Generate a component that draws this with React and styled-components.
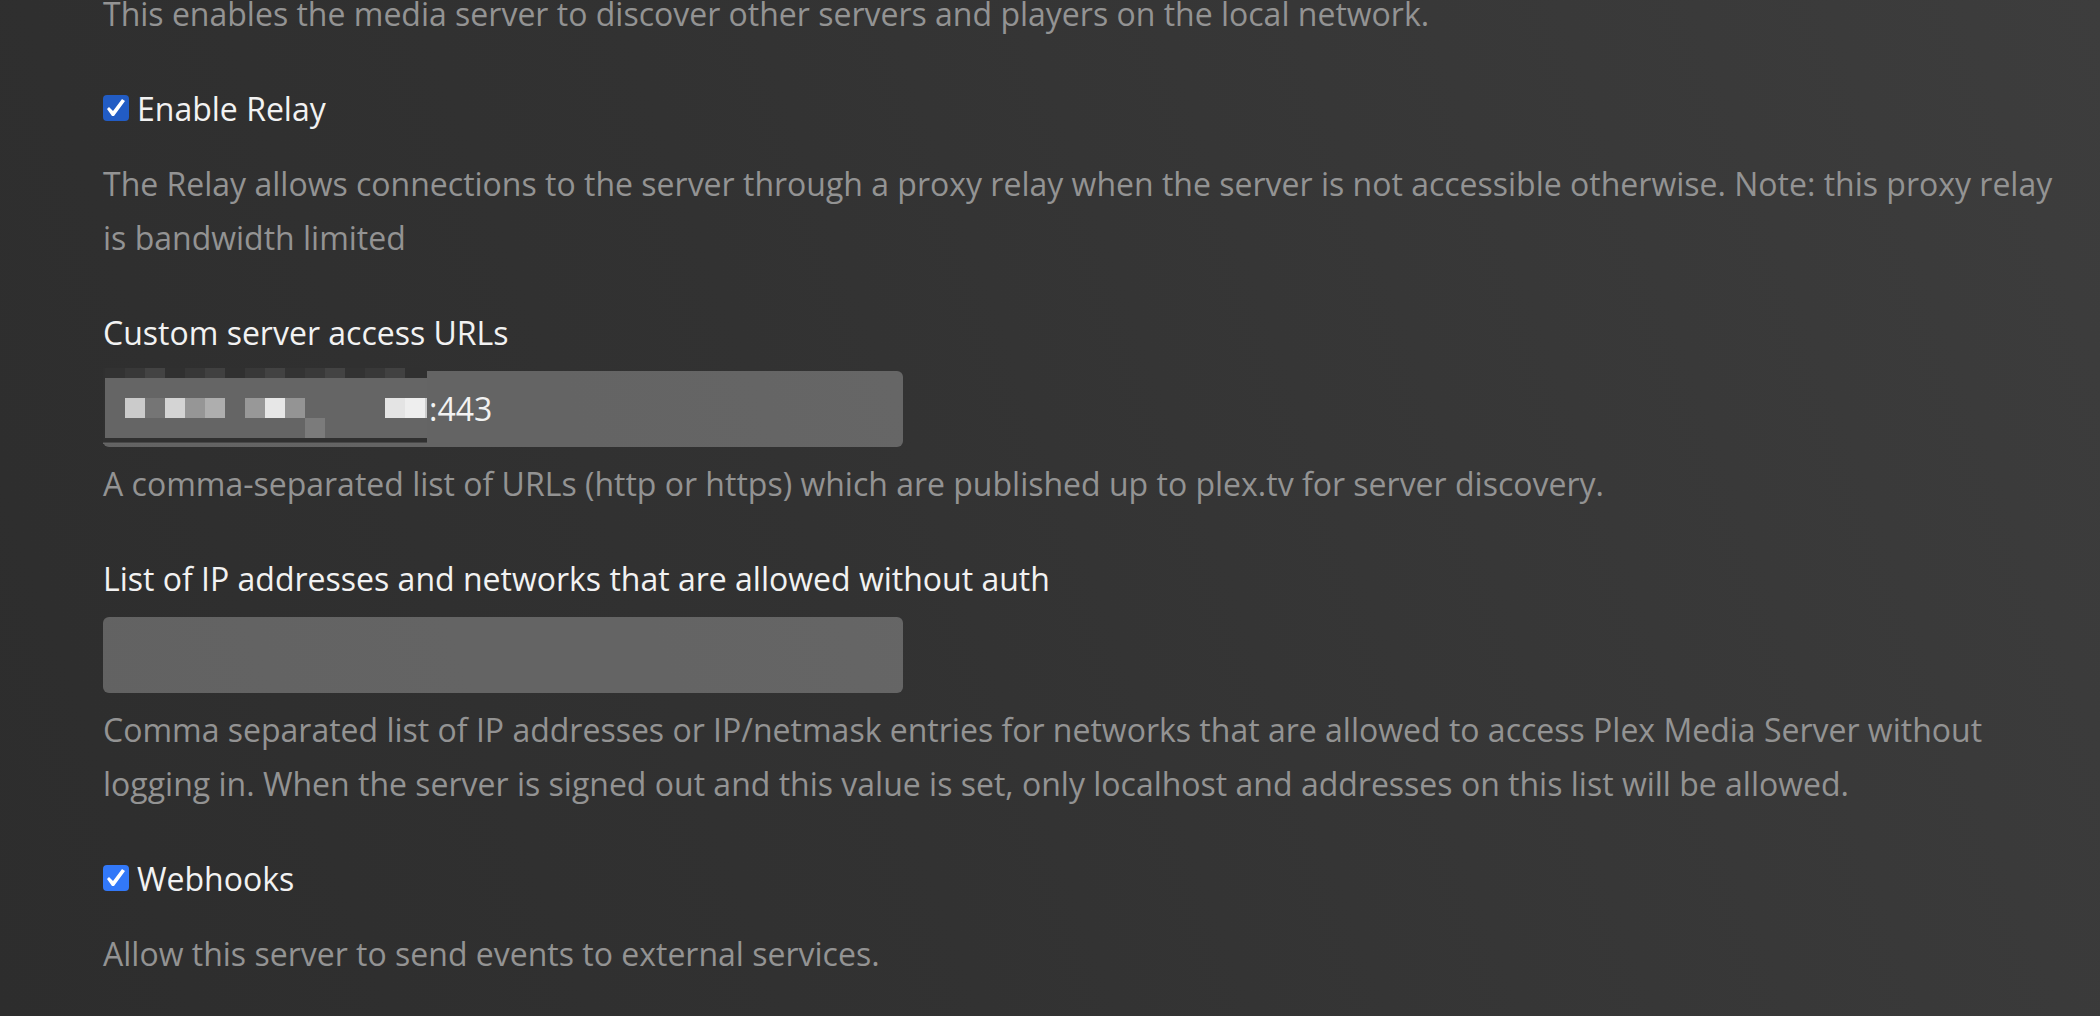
import React, { useId } from "react";
import styled, { createGlobalStyle } from "styled-components";

const GlobalStyle = createGlobalStyle`
  *, *::before, *::after { box-sizing: border-box; }
  html { min-height: 100%; background: #323232; }
  body {
    margin: 0;
    font-family: "Open Sans", "Noto Sans", sans-serif;
    font-size: 32px;
    line-height: 54px;
    color: #f2f2f2;
  }
`;

const Page = styled.main`
  min-height: 100vh;
  padding: 0 40px 0 103px;
  overflow: hidden;
  background: linear-gradient(70deg, #2d2d2d 0%, #323232 40%, #3d3d3d 100%);
`;

const Form = styled.form`
  display: flex;
  flex-direction: column;
  gap: 41px;
  margin-top: -13px;
`;

const Group = styled.div`
  display: flex;
  flex-direction: column;
`;

const Label = styled.label`
  align-self: flex-start;
  margin-bottom: 11px;
`;

const CheckLabel = styled.label`
  display: flex;
  align-items: center;
  align-self: flex-start;
  gap: 8px;
  margin-bottom: 21px;
`;

const Checkbox = styled.input`
  appearance: none;
  width: 26px;
  height: 26px;
  margin: 0 0 2px;
  border-radius: 4px;
  background: ${(p) => (p.$pressed ? "#225cc4" : "#3278f8")};

  &:checked::before {
    content: "";
    display: block;
    width: 26px;
    height: 26px;
    background: #fff;
    clip-path: polygon(4px 14px, 6px 12px, 10px 16px, 19px 4px, 22px 6px, 11px 21px, 9px 21px);
  }
`;

const Help = styled.p`
  margin: 0;
  color: #939393;
`;

const Field = styled.div`
  position: relative;
  display: flex;
  width: 100%;
  max-width: 800px;
  margin-bottom: 10px;
`;

const TextInput = styled.input`
  width: 100%;
  height: 76px;
  padding: 0 20px 2px ${(p) => (p.$masked ? "326px" : "20px")};
  border: 0;
  border-radius: 6px;
  outline: 0;
  background: rgba(255, 255, 255, 0.25);
  color: #f2f2f2;
  font: inherit;
`;

const Mask = styled.svg`
  position: absolute;
  top: -3px;
  left: 0;
`;

const edgeTones = [
  "#323232", "#383838", "#434343", "#303030", "#373737", "#404040", "#303030", "#383838",
  "#424242", "#333333", "#393939", "#434343", "#323232", "#383838", "#414141", "#303030", "#303030",
];

const blocks = [
  [22, "#cbcbcb"], [42, "#757575"], [62, "#d4d4d4"], [82, "#969696"], [102, "#aeaeae"],
  [142, "#989898"], [162, "#e7e7e7"], [182, "#949494"], [282, "#e4e4e4"], [302, "#eeeeee"],
];

function Mosaic() {
  return (
    <Mask width="324" height="76" viewBox="0 0 324 76" shapeRendering="crispEdges" aria-hidden="true">
      <rect width="2" height="76" fill="#303030" />
      {edgeTones.map((tone, i) => (
        <rect key={i} x={2 + i * 20} width="20" height="10" fill={tone} />
      ))}
      <rect x="2" y="10" width="322" height="60" fill="#656565" />
      {blocks.map(([x, tone]) => (
        <rect key={x} x={x} y="30" width="20" height="20" fill={tone} />
      ))}
      <rect x="322" y="30" width="2" height="20" fill="#cccccc" />
      <rect x="202" y="50" width="20" height="20" fill="#7b7b7b" />
      <rect y="70" width="324" height="4" fill="#303030" />
      <rect y="74" width="324" height="1" fill="#484848" />
      <rect y="75" width="324" height="1" fill="#656565" />
    </Mask>
  );
}

function CheckSetting({ label, help, pressed }) {
  const id = useId();
  return (
    <Group>
      <CheckLabel htmlFor={id}>
        <Checkbox id={id} type="checkbox" defaultChecked $pressed={pressed} />
        {label}
      </CheckLabel>
      <Help>{help}</Help>
    </Group>
  );
}

function TextSetting({ label, help, value = "", masked }) {
  const id = useId();
  return (
    <Group>
      <Label htmlFor={id}>{label}</Label>
      <Field>
        <TextInput id={id} type="text" defaultValue={value} $masked={masked} />
        {masked && <Mosaic />}
      </Field>
      <Help>{help}</Help>
    </Group>
  );
}

export default function App() {
  return (
    <>
      <GlobalStyle />
      <Page>
        <Form>
          <Help>This enables the media server to discover other servers and players on the local network.</Help>
          <CheckSetting
            pressed
            label="Enable Relay"
            help="The Relay allows connections to the server through a proxy relay when the server is not accessible otherwise. Note: this proxy relay is bandwidth limited"
          />
          <TextSetting
            masked
            label="Custom server access URLs"
            value=":443"
            help="A comma-separated list of URLs (http or https) which are published up to plex.tv for server discovery."
          />
          <TextSetting
            label="List of IP addresses and networks that are allowed without auth"
            help="Comma separated list of IP addresses or IP/netmask entries for networks that are allowed to access Plex Media Server without logging in. When the server is signed out and this value is set, only localhost and addresses on this list will be allowed."
          />
          <CheckSetting label="Webhooks" help="Allow this server to send events to external services." />
        </Form>
      </Page>
    </>
  );
}
